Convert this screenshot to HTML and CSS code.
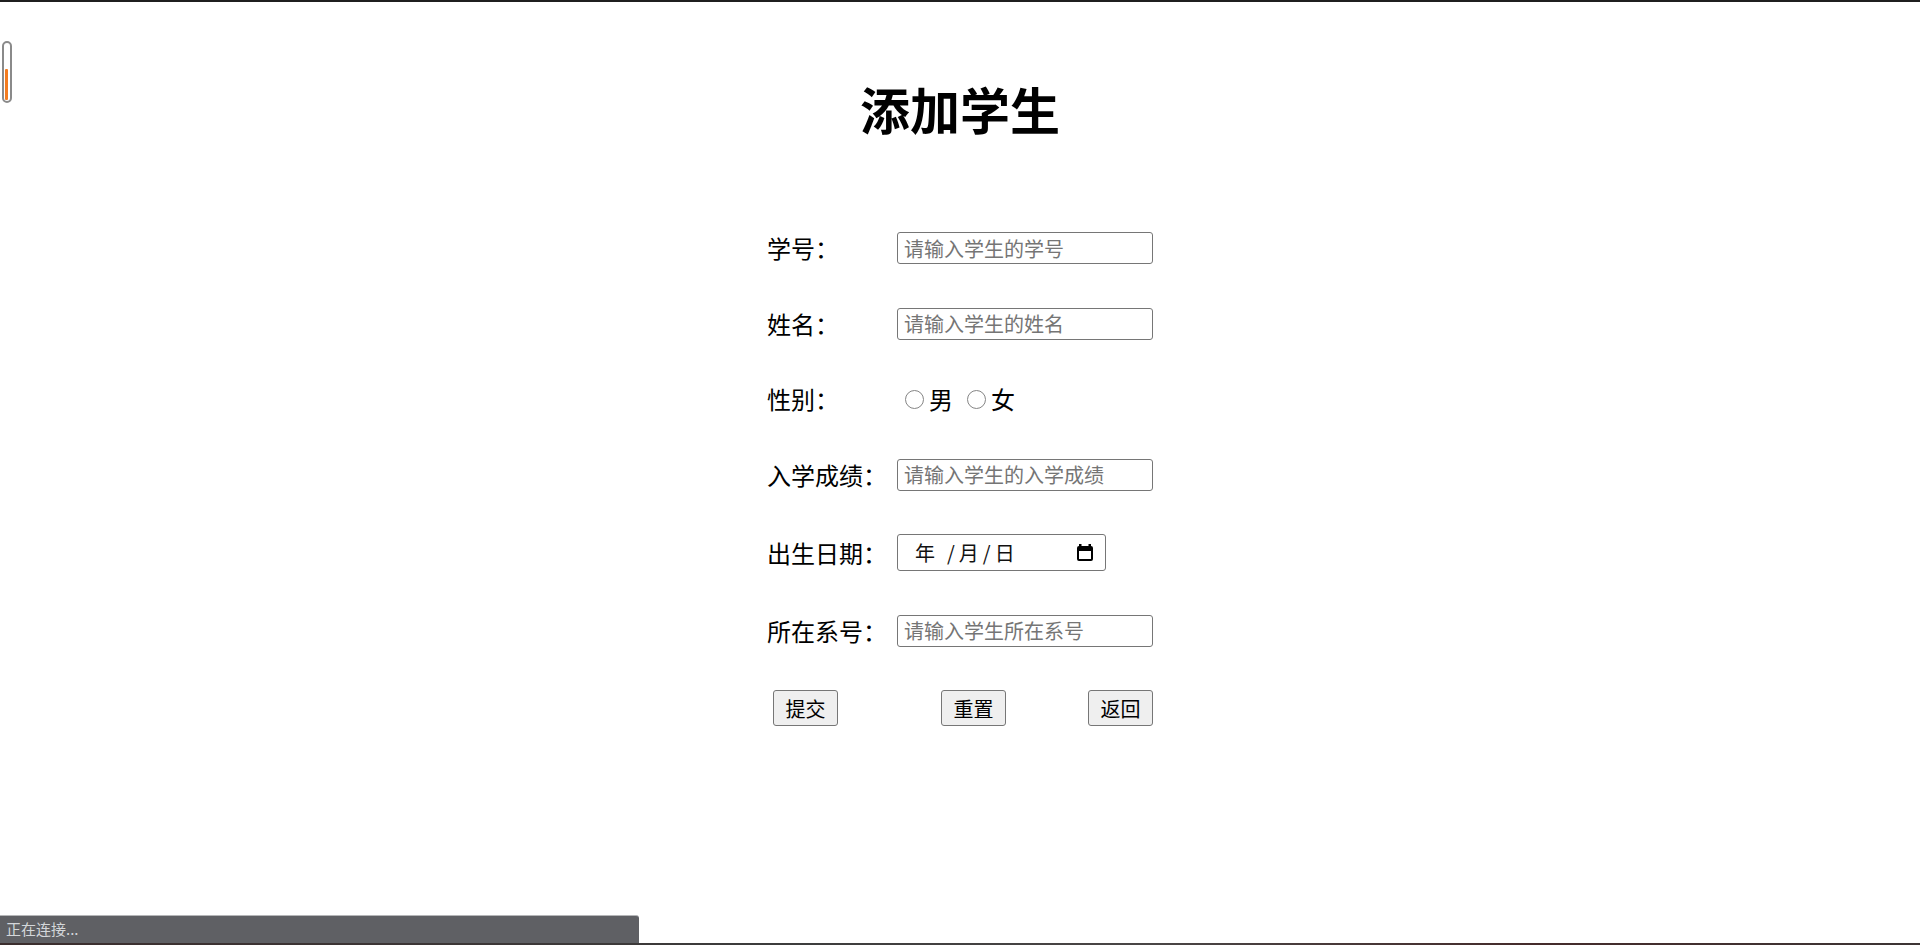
FILE: index.html
```html
<!DOCTYPE html>
<html lang="zh-CN">
<head>
    <meta charset="UTF-8">
    <title>添加学生</title>
    <link rel="stylesheet" href="styles.css">
</head>
<body>
    <div class="top-line"></div>
    <div class="side-meter"><div class="side-meter-fill"></div></div>

    <h1 class="title">添加学生</h1>

    <form class="student-form">
        <label class="field-label" for="sno">学号：</label>
        <input class="text-input" type="text" id="sno" placeholder="请输入学生的学号">

        <label class="field-label" for="sname">姓名：</label>
        <input class="text-input" type="text" id="sname" placeholder="请输入学生的姓名">

        <span class="field-label">性别：</span>
        <div class="radios">
            <label class="radio"><input type="radio" name="sex" value="男">男</label>
            <label class="radio"><input type="radio" name="sex" value="女">女</label>
        </div>

        <label class="field-label" for="score">入学成绩：</label>
        <input class="text-input" type="text" id="score" placeholder="请输入学生的入学成绩">

        <span class="field-label">出生日期：</span>
        <div class="date-box">
            <span class="date-year">年</span><span class="date-sep">/</span><span>月</span><span class="date-sep">/</span><span>日</span>
            <svg class="date-icon" width="16" height="17" viewBox="0 0 16 17">
                <rect x="1" y="3" width="14" height="13" rx="1" fill="none" stroke="#000" stroke-width="2"/>
                <rect x="1" y="3" width="14" height="4" fill="#000"/>
                <rect x="2" y="0" width="2.5" height="4" fill="#000"/>
                <rect x="11.5" y="0" width="2.5" height="4" fill="#000"/>
            </svg>
        </div>

        <label class="field-label" for="dept">所在系号：</label>
        <input class="text-input" type="text" id="dept" placeholder="请输入学生所在系号">

        <div class="buttons">
            <button type="submit">提交</button>
            <button type="reset" class="btn-reset">重置</button>
            <button type="button" class="btn-back">返回</button>
        </div>
    </form>

    <div class="status-bar">正在连接...</div>
    <div class="bottom-line"></div>
</body>
</html>
```

FILE: styles.css
```css
body {
    margin: 0;
    font-family: "Noto Sans CJK SC", "Microsoft YaHei", sans-serif;
    color: #000;
    background: #fff;
}
.top-line {
    height: 2px;
    background-color: #1f1f1f;
}
.side-meter {
    position: fixed;
    left: 2px;
    top: 41px;
    width: 10px;
    height: 62px;
    box-sizing: border-box;
    border: 2px solid #8a8a8a;
    border-radius: 6px;
}
.side-meter-fill {
    position: absolute;
    left: 1px;
    width: 3px;
    top: 26px;
    bottom: 1px;
    background-color: #f47c20;
    border-radius: 1px;
}
.title {
    margin: 77px 0 0;
    font-size: 50px;
    line-height: 58px;
    font-weight: bold;
    text-align: center;
}
.student-form {
    display: grid;
    grid-template-columns: 130px 256px;
    width: 386px;
    margin: 95px auto 0;
    row-gap: 43.5px;
    align-items: center;
}
.field-label {
    font-size: 24px;
    line-height: 32px;
}
.text-input {
    width: 256px;
    height: 32px;
    box-sizing: border-box;
    border: 1px solid #767676;
    border-radius: 3px;
    padding: 0 6px;
    font-family: inherit;
    font-size: 20px;
    margin: 0;
}
.text-input::placeholder {
    color: #757575;
}
.radios {
    font-size: 24px;
    line-height: 32px;
    display: flex;
    align-items: center;
}
.radio {
    display: flex;
    align-items: center;
    margin-right: 6px;
}
.radio input {
    appearance: none;
    width: 19px;
    height: 19px;
    margin: 0 5px 0 8px;
    border: 1px solid #858585;
    border-radius: 50%;
    background: #fff;
}
.radio input:checked {
    background: radial-gradient(#0075ff 40%, #fff 45%);
    border-color: #0075ff;
}
.date-box {
    width: 209px;
    height: 37px;
    box-sizing: border-box;
    border: 1px solid #767676;
    border-radius: 3px;
    display: flex;
    align-items: center;
    padding: 0 12px 0 17px;
    font-size: 20px;
    color: #111;
}
.date-year {
    margin-right: 8px;
}
.date-sep {
    margin: 0 4px;
}
.date-icon {
    margin-left: auto;
}
.buttons {
    grid-column: 1 / -1;
    display: flex;
    padding-left: 6px;
}
.buttons button {
    width: 65px;
    height: 36px;
    padding: 0 9px;
    font-family: inherit;
    font-size: 20px;
    background-color: #efefef;
    border: 1px solid #767676;
    border-radius: 3px;
    color: #000;
}
.buttons .btn-reset {
    margin-left: 103px;
}
.buttons .btn-back {
    margin-left: auto;
}
.status-bar {
    position: fixed;
    left: 0;
    bottom: 2px;
    width: 639px;
    height: 28px;
    box-sizing: border-box;
    border-top: 1px solid #b5b6b8;
    border-top-right-radius: 3px;
    background-color: #5f6064;
    color: #d4d7da;
    font-size: 15px;
    line-height: 26px;
    padding-left: 6px;
}
.bottom-line {
    position: fixed;
    left: 0;
    right: 0;
    bottom: 0;
    height: 2px;
    background: linear-gradient(90deg, #3b2d2d, #3c3c3c 40%, #4a4646 60%, #452b2b 80%, #3d3535);
}
```
